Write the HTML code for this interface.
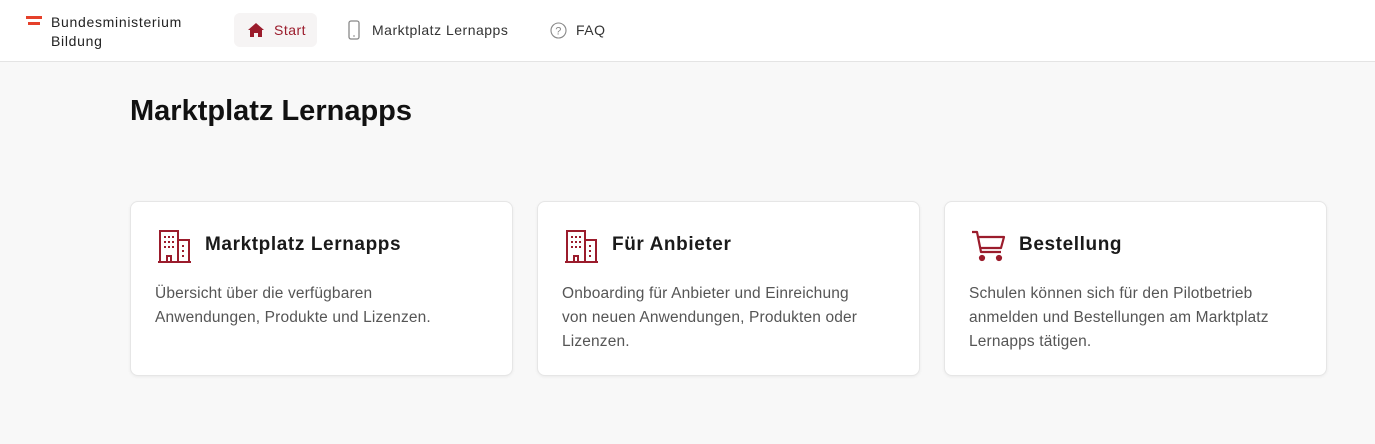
<!DOCTYPE html>
<html><head><meta charset="utf-8"><style>
*{margin:0;padding:0;box-sizing:border-box}
body{width:1375px;height:444px;background:#f8f8f8;font-family:"Liberation Sans",sans-serif;overflow:hidden;position:relative}
.hdr{position:absolute;left:0;top:0;width:1375px;height:62px;background:#fff;border-bottom:1px solid #e4e4e4}
.logo{position:absolute;left:26px;top:16px}
.logo i{display:block;width:16px;height:3px;background:#e5402a;margin-bottom:3px}
.logo i.b{width:12px;margin-left:2px}
.lt{position:absolute;left:51px;top:13px;font-size:14px;line-height:19px;color:#222;letter-spacing:.7px}
.nav{position:absolute;top:13px;height:34px;display:flex;align-items:center;font-size:14px;color:#333;letter-spacing:.5px}
.start{left:234px;width:83px;background:#f6f4f4;border-radius:6px;color:#9b1c2c;padding-left:14px}
h1{position:absolute;left:130px;top:95px;font-size:29px;font-weight:bold;color:#111;letter-spacing:0}
.card{position:absolute;top:201px;width:383px;height:175px;background:#fff;border:1px solid #e6e6e6;border-radius:8px;box-shadow:0 1px 3px rgba(0,0,0,.06)}
.card svg{position:absolute;left:26px;top:27px}
.card h2{position:absolute;left:74px;top:32px;font-size:19px;font-weight:bold;color:#1a1a1a;letter-spacing:.6px}
.card p{position:absolute;left:24px;top:80px;width:305px;font-size:15.5px;line-height:24px;color:#555;letter-spacing:.15px}
</style></head><body>
<div class="hdr">
<div class="logo"><i></i><i class="b"></i></div>
<div class="lt">Bundesministerium<br>Bildung</div>
<div class="nav start"><svg width="16" height="14" viewBox="0 0 16 14"><path d="M8 0L0 7h2v7h4v-4h4v4h4V7h2z" fill="#9b1c2c"/></svg><span style="margin-left:10px">Start</span></div>
<div class="nav" style="left:348px"><svg width="12" height="20" viewBox="0 0 12 20"><rect x="1" y="1" width="10" height="18" rx="2" fill="none" stroke="#888" stroke-width="1.3"/><line x1="5" y1="16" x2="7" y2="16" stroke="#888"/></svg><span style="margin-left:12px">Marktplatz Lernapps</span></div>
<div class="nav" style="left:550px"><svg width="17" height="17" viewBox="0 0 17 17"><circle cx="8.5" cy="8.5" r="7.5" fill="none" stroke="#888" stroke-width="1.1"/><text x="8.5" y="12.5" font-size="11" text-anchor="middle" fill="#888" font-family="Liberation Sans">?</text></svg><span style="margin-left:9px">FAQ</span></div>
</div>
<h1>Marktplatz Lernapps</h1>
<div class="card" style="left:130px">
<svg width="35" height="34" viewBox="0 0 35 34" fill="none" stroke="#9b1c2c" stroke-width="2"><path d="M1 33h33M3 33V2h18v31M21 11h11v22M10 33v-6h4v6"/><g fill="#9b1c2c" stroke="none"><rect x="7" y="7" width="2" height="2"/><rect x="11" y="7" width="2" height="2"/><rect x="15" y="7" width="2" height="2"/><rect x="7" y="12" width="2" height="2"/><rect x="11" y="12" width="2" height="2"/><rect x="15" y="12" width="2" height="2"/><rect x="7" y="17" width="2" height="2"/><rect x="11" y="17" width="2" height="2"/><rect x="15" y="17" width="2" height="2"/><rect x="25" y="16" width="2" height="2"/><rect x="25" y="21" width="2" height="2"/><rect x="25" y="26" width="2" height="2"/></g></svg>
<h2>Marktplatz Lernapps</h2>
<p>Übersicht über die verfügbaren Anwendungen, Produkte und Lizenzen.</p></div>
<div class="card" style="left:537px">
<svg width="35" height="34" viewBox="0 0 35 34" fill="none" stroke="#9b1c2c" stroke-width="2"><path d="M1 33h33M3 33V2h18v31M21 11h11v22M10 33v-6h4v6"/><g fill="#9b1c2c" stroke="none"><rect x="7" y="7" width="2" height="2"/><rect x="11" y="7" width="2" height="2"/><rect x="15" y="7" width="2" height="2"/><rect x="7" y="12" width="2" height="2"/><rect x="11" y="12" width="2" height="2"/><rect x="15" y="12" width="2" height="2"/><rect x="7" y="17" width="2" height="2"/><rect x="11" y="17" width="2" height="2"/><rect x="15" y="17" width="2" height="2"/><rect x="25" y="16" width="2" height="2"/><rect x="25" y="21" width="2" height="2"/><rect x="25" y="26" width="2" height="2"/></g></svg>
<h2>Für Anbieter</h2>
<p>Onboarding für Anbieter und Einreichung von neuen Anwendungen, Produkten oder Lizenzen.</p></div>
<div class="card" style="left:944px">
<svg width="36" height="34" viewBox="0 0 36 34" fill="none" stroke="#9b1c2c" stroke-width="2.2" stroke-linejoin="round"><path d="M1 3h5l4 20h20M8 8h25l-3 11H9"/><circle cx="11" cy="29" r="2" fill="#9b1c2c"/><circle cx="28" cy="29" r="2" fill="#9b1c2c"/></svg>
<h2>Bestellung</h2>
<p>Schulen können sich für den Pilotbetrieb anmelden und Bestellungen am Marktplatz Lernapps tätigen.</p></div>
</body></html>
